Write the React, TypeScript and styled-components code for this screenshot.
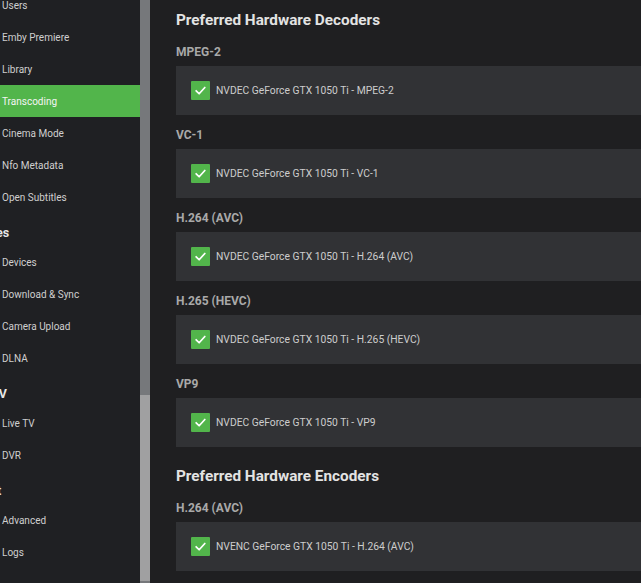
import React from 'react';
import styled, {createGlobalStyle} from "styled-components";

const GlobalStyle = createGlobalStyle`
  html, body {
    margin: 0;
    padding: 0;
    height: 100%;
    background: #1f1f21;
    overflow: hidden;
  }
  body {
    font-family: Roboto, "Liberation Sans", sans-serif;
  }
`

type NavEntry = { header?: string; label?: string; active?: boolean }

const nav: NavEntry[] = [
    {label: "Users"},
    {label: "Emby Premiere"},
    {label: "Library"},
    {label: "Transcoding", active: true},
    {label: "Cinema Mode"},
    {label: "Nfo Metadata"},
    {label: "Open Subtitles"},
    {header: "Devices"},
    {label: "Devices"},
    {label: "Download & Sync"},
    {label: "Camera Upload"},
    {label: "DLNA"},
    {header: "Live TV"},
    {label: "Live TV"},
    {label: "DVR"},
    {header: "Expert"},
    {label: "Advanced"},
    {label: "Logs"},
]

type CodecGroup = { codec: string; device: string }

const decoders: CodecGroup[] = [
    {codec: "MPEG-2", device: "NVDEC GeForce GTX 1050 Ti - MPEG-2"},
    {codec: "VC-1", device: "NVDEC GeForce GTX 1050 Ti - VC-1"},
    {codec: "H.264 (AVC)", device: "NVDEC GeForce GTX 1050 Ti - H.264 (AVC)"},
    {codec: "H.265 (HEVC)", device: "NVDEC GeForce GTX 1050 Ti - H.265 (HEVC)"},
    {codec: "VP9", device: "NVDEC GeForce GTX 1050 Ti - VP9"},
]

const encoders: CodecGroup[] = [
    {codec: "H.264 (AVC)", device: "NVENC GeForce GTX 1050 Ti - H.264 (AVC)"},
]

const CheckBox = () => (
    <Box>
        <svg width="13" height="13" viewBox="0 0 24 24" fill="none" stroke="#fff" strokeWidth="3.2"
             strokeLinecap="round" strokeLinejoin="round">
            <polyline points="4,12.5 9.5,18 20,6.5"/>
        </svg>
    </Box>
)

const Section = (props: { title: string; groups: CodecGroup[] }) => (
    <>
        <Heading>{props.title}</Heading>
        {props.groups.map((g, i) => (
            <div key={i}>
                <CodecLabel>{g.codec}</CodecLabel>
                <Card>
                    <CheckBox/>
                    <CardText>{g.device}</CardText>
                </Card>
            </div>
        ))}
    </>
)

export default function App() {
    return (
        <Page>
            <GlobalStyle/>
            <Sidebar>
                <NavList>
                    {nav.map((n, i) => n.header
                        ? <NavHeader key={i}>{n.header}</NavHeader>
                        : <NavItem key={i} $active={n.active}>{n.label}</NavItem>)}
                </NavList>
            </Sidebar>
            <ScrollTrack>
                <Thumb/>
            </ScrollTrack>
            <Main>
                <Content>
                    <Section title="Preferred Hardware Decoders" groups={decoders}/>
                    <Section title="Preferred Hardware Encoders" groups={encoders}/>
                </Content>
            </Main>
        </Page>
    );
}

const Page = styled.div`
  display: flex;
  width: 641px;
  height: 583px;
  overflow: hidden;
  background: #1f1f21;
`

const Sidebar = styled.nav`
  width: 140px;
  flex-shrink: 0;
  height: 100%;
  overflow: hidden;
  background: #1f2023;
`

const NavList = styled.div`
  display: flex;
  flex-direction: column;
  margin-top: -11px;
`

const NavItem = styled.div<{ $active?: boolean }>`
  height: 32px;
  flex-shrink: 0;
  display: flex;
  align-items: center;
  padding-left: 2px;
  font-size: 10px;
  color: ${p => p.$active ? "#f4f4f4" : "#cfcfcf"};
  background: ${p => p.$active ? "#52b54b" : "transparent"};
  white-space: nowrap;
`

const NavHeader = styled.div`
  height: 33px;
  flex-shrink: 0;
  display: flex;
  align-items: center;
  padding-top: 5px;
  box-sizing: border-box;
  margin-left: -35px;
  font-size: 12.5px;
  font-weight: 700;
  color: #e6e6e6;
  white-space: nowrap;
`

const ScrollTrack = styled.div`
  width: 10px;
  flex-shrink: 0;
  height: 100%;
  display: flex;
  flex-direction: column;
  background: #76787b;
`

const Thumb = styled.div`
  margin-top: 395px;
  height: 186px;
  background: #a0a0a1;
`

const Main = styled.main`
  flex: 1;
  height: 100%;
  overflow: hidden;
  background: #1f1f21;
`

const Content = styled.div`
  margin-top: -9px;
  padding-left: 26px;
  margin-right: -30px;
`

const Heading = styled.h2`
  margin: 0;
  height: 41px;
  box-sizing: border-box;
  padding-top: 17px;
  line-height: 24px;
  font-size: 15.3px;
  font-weight: 700;
  color: #e3e3e3;
`

const CodecLabel = styled.div`
  height: 34px;
  box-sizing: border-box;
  padding-top: 6px;
  line-height: 28px;
  font-size: 12px;
  font-weight: 700;
  color: #a9a9a9;
`

const Card = styled.div`
  height: 49px;
  display: flex;
  align-items: center;
  padding-left: 15px;
  gap: 6px;
  background: #313235;
`

const Box = styled.div`
  width: 19px;
  height: 19px;
  border-radius: 1px;
  background: #52b54b;
  display: flex;
  align-items: center;
  justify-content: center;
`

const CardText = styled.span`
  font-size: 10.3px;
  color: #cdcdcd;
  white-space: nowrap;
`
